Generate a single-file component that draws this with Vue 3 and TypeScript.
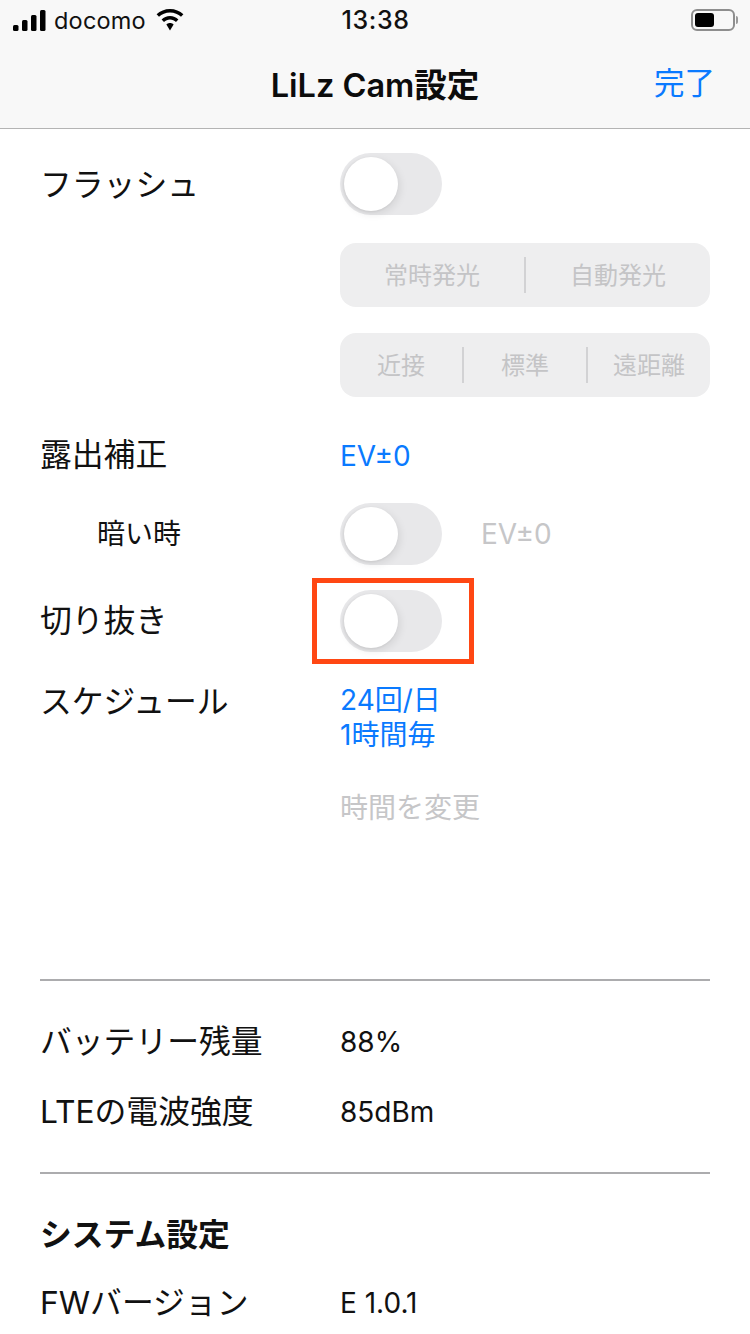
<template>
  <div class="screen">
    <header class="head">
      <div class="status">
        <div class="status-left">
          <svg class="signal" width="33" height="21" viewBox="0 0 33 21">
            <rect x="0" y="15" width="5.500" height="6" rx="1.500" />
            <rect x="9" y="10" width="5.500" height="11" rx="1.500" />
            <rect x="18" y="5" width="5.500" height="16" rx="1.500" />
            <rect x="27" y="0" width="5.500" height="21" rx="1.500" />
          </svg>
          <span class="carrier">docomo</span>
          <svg class="wifi" width="30" height="22" viewBox="0 0 30 22">
            <path d="M15 3.400c4.300 0 8.200 1.700 11 4.400l2.400-2.500C24.900 2 20.200 0 15 0S5.100 2 1.600 5.300L4 7.800C6.800 5.100 10.700 3.400 15 3.400z" />
            <path d="M15 10.500c2.300 0 4.400.9 6 2.400l2.400-2.500C21.200 8.300 18.300 7 15 7s-6.200 1.300-8.400 3.400L9 12.900c1.600-1.500 3.700-2.400 6-2.400z" />
            <path d="M15 14c-1.400 0-2.700.6-3.600 1.400L15 21.500l3.600-6.100C17.700 14.600 16.400 14 15 14z" />
          </svg>
        </div>
        <span class="clock">13:38</span>
        <div class="status-right">
          <div class="battery"><div class="battery-fill"></div></div>
          <div class="battery-cap"></div>
        </div>
      </div>
      <div class="nav">
        <span class="nav-title">LiLz Cam設定</span>
        <span class="nav-done">完了</span>
      </div>
    </header>

    <main class="body">
      <div class="row row-flash">
        <span class="label">フラッシュ</span>
        <div class="switch"><div class="knob"></div></div>
      </div>
      <div class="segment seg-first">
        <span v-for="s in flashModes" :key="s" class="seg-item">{{ s }}</span>
      </div>
      <div class="segment seg-second">
        <span v-for="s in distances" :key="s" class="seg-item">{{ s }}</span>
      </div>

      <div class="row row-ev">
        <span class="label">露出補正</span>
        <span class="value blue">EV±0</span>
      </div>
      <div class="row row-dark">
        <span class="label label-sub">暗い時</span>
        <div class="switch"><div class="knob"></div></div>
        <span class="value muted ev-off">EV±0</span>
      </div>
      <div class="row row-crop">
        <span class="label">切り抜き</span>
        <div class="switch">
          <div class="knob"></div>
          <div class="red-box"></div>
        </div>
      </div>
      <div class="row row-schedule">
        <span class="label">スケジュール</span>
        <div class="value blue schedule">24回/日<br />1時間毎</div>
      </div>
      <div class="row row-change">
        <span class="label"></span>
        <span class="value muted">時間を変更</span>
      </div>

      <div class="rule rule-one"></div>
      <div class="row row-battery">
        <span class="label">バッテリー残量</span>
        <span class="value">88%</span>
      </div>
      <div class="row row-lte">
        <span class="label">LTEの電波強度</span>
        <span class="value">85dBm</span>
      </div>
      <div class="rule rule-two"></div>
      <div class="section">システム設定</div>
      <div class="row row-fw">
        <span class="label">FWバージョン</span>
        <span class="value">E 1.0.1</span>
      </div>
    </main>
  </div>
</template>

<script setup lang="ts">
const flashModes: string[] = ['常時発光', '自動発光']
const distances: string[] = ['近接', '標準', '遠距離']
</script>

<style>
html,
body {
  margin: 0;
  background: #fff;
}
</style>

<style scoped>
.screen {
  width: 750px;
  height: 1334px;
  overflow: hidden;
  background: #fff;
  color: #111;
  font-family: Inter, "Noto Sans CJK JP", sans-serif;
}

.head {
  height: 129px;
  box-sizing: border-box;
  background: #f8f8f8;
  border-bottom: 1px solid #b4b4b4;
}

.status {
  height: 40px;
  padding: 0 12px 0 13px;
  display: grid;
  grid-template-columns: 1fr auto 1fr;
  align-items: center;
}

.status-left {
  display: flex;
  align-items: center;
}

.signal {
  fill: #000;
  margin-right: 8px;
}

.carrier {
  font-size: 23.500px;
  color: #111;
  letter-spacing: 0.2px;
}

.wifi {
  fill: #000;
  margin-left: 9px;
}

.clock {
  font-size: 25px;
  font-weight: 500;
  letter-spacing: 0.6px;
}

.status-right {
  display: flex;
  align-items: center;
  justify-content: flex-end;
}

.battery {
  width: 44px;
  height: 22px;
  padding: 2px;
  box-sizing: border-box;
  border: 2px solid #8e8e8e;
  border-radius: 6px;
}

.battery-fill {
  width: 19px;
  height: 14px;
  background: #000;
  border-radius: 3px;
}

.battery-cap {
  width: 2px;
  height: 8px;
  margin-left: 1px;
  background: #9a9a9a;
  border-radius: 0 2px 2px 0;
}

.nav {
  height: 88px;
  padding-bottom: 4px;
  box-sizing: border-box;
  position: relative;
  display: flex;
  align-items: center;
  justify-content: center;
}

.nav-title {
  font-size: 32.500px;
  font-weight: 600;
  color: #0c0c0c;
}

.nav-done {
  position: absolute;
  right: 35px;
  top: 21px;
  font-size: 30.500px;
  line-height: 44px;
  color: #0a7aff;
}

.body {
  padding: 0 40px;
}

.row {
  display: flex;
  align-items: center;
}

.label {
  width: 300px;
  flex: none;
  font-size: 31.800px;
  line-height: 40px;
  color: #111;
}

.label-sub {
  padding-left: 57px;
  box-sizing: border-box;
  font-size: 28px;
}

.value {
  font-size: 28px;
  line-height: 36px;
  color: #111;
}

.blue {
  color: #0a7aff;
}

.muted {
  color: #c6c6c8;
}

.switch {
  position: relative;
  width: 102px;
  height: 62px;
  flex: none;
  border-radius: 31px;
  background: #e8e8ea;
}

.knob {
  position: absolute;
  left: 4px;
  top: 4px;
  width: 54px;
  height: 54px;
  border-radius: 50%;
  background: #fff;
  box-shadow: 2px 3px 9px rgba(0, 0, 0, 0.09), -1px 1px 3px rgba(0, 0, 0, 0.08);
}

.red-box {
  position: absolute;
  left: -28px;
  top: -12px;
  width: 162px;
  height: 86px;
  box-sizing: border-box;
  border: 5px solid #ff4713;
}

.row-flash {
  margin-top: 24px;
  height: 62px;
}

.row-flash .label {
  padding-top: 2px;
}

.segment {
  margin-left: 300px;
  width: 370px;
  height: 64px;
  border-radius: 16px;
  background: #eeeeef;
  display: flex;
  align-items: center;
}

.seg-first {
  margin-top: 28px;
}

.seg-second {
  margin-top: 26px;
}

.seg-item {
  flex: 1;
  height: 36px;
  line-height: 38px;
  text-align: center;
  font-size: 24px;
  color: #c4c4c6;
  border-left: 2px solid #d2d2d4;
}

.seg-item:first-child {
  border-left: 0;
}

.row-ev {
  margin-top: 39px;
  height: 40px;
}

.row-ev .label {
  padding-bottom: 2px;
}

.row-dark {
  margin-top: 27px;
  height: 62px;
}

.ev-off {
  margin-left: 39px;
}

.row-crop {
  margin-top: 25px;
  height: 62px;
}

.row-schedule {
  margin-top: 30px;
  height: 71px;
  align-items: flex-start;
}

.schedule {
  padding-top: 1px;
  line-height: 35px;
}

.row-change {
  margin-top: 35px;
  height: 40px;
}

.rule {
  height: 2px;
  background: #acacae;
}

.rule-one {
  margin-top: 151px;
}

.row-battery {
  margin-top: 41px;
  height: 40px;
}

.row-lte {
  margin-top: 30px;
  height: 40px;
}

.rule-two {
  margin-top: 40px;
}

.section {
  margin-top: 41px;
  font-size: 31.800px;
  line-height: 40px;
  font-weight: 700;
  color: #111;
}

.row-fw {
  margin-top: 28px;
  height: 40px;
}
</style>
